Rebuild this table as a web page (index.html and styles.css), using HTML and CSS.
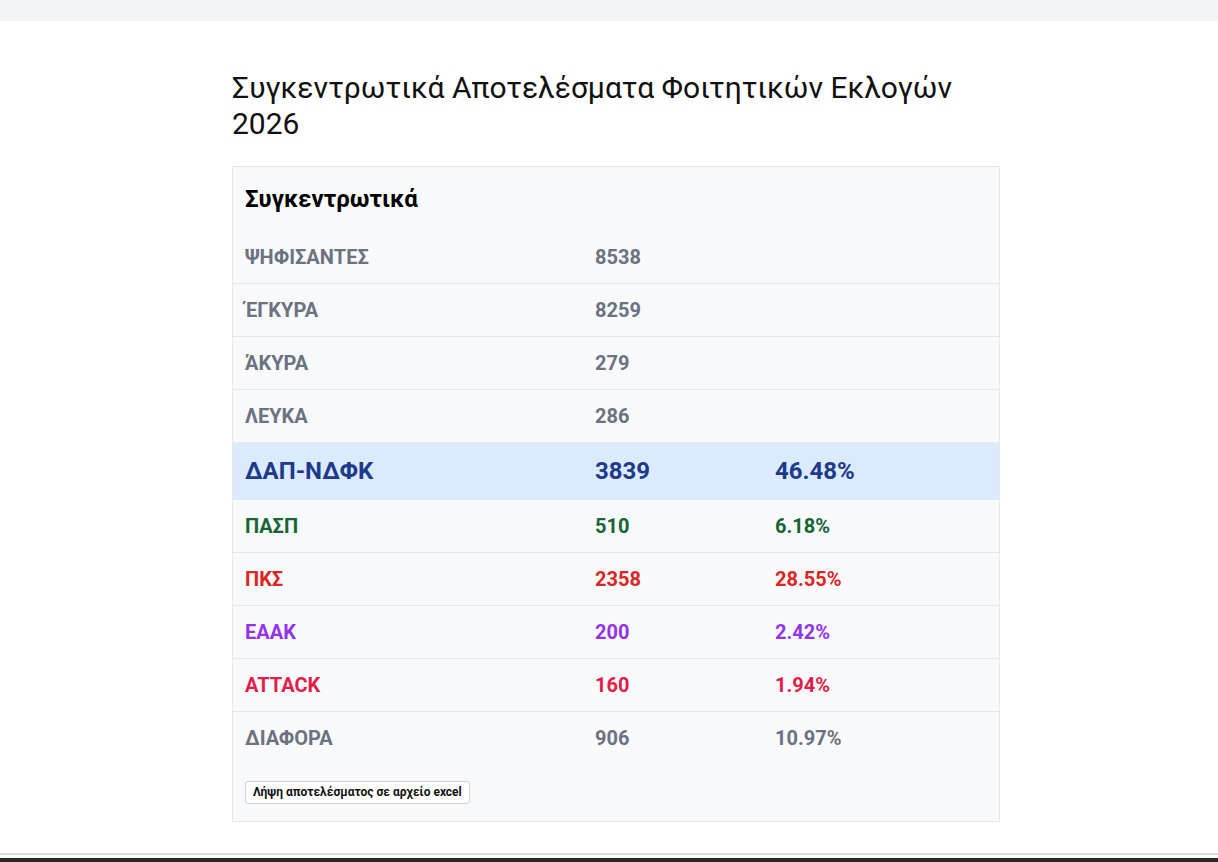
FILE: index.html
```html
<!DOCTYPE html>
<html lang="el">
<head>
<meta charset="utf-8">
<title>Αποτελέσματα</title>
<link rel="stylesheet" href="styles.css">
</head>
<body>
<div class="topbar"></div>
<main class="main">
  <h1 class="title">Συγκεντρωτικά Αποτελέσματα Φοιτητικών Εκλογών 2026</h1>
  <section class="card">
    <h2 class="card-title">Συγκεντρωτικά</h2>
    <table class="results">
      <colgroup><col class="c1"><col class="c2"><col class="c3"></colgroup>
      <tbody>
        <tr class="meta"><td>ΨΗΦΙΣΑΝΤΕΣ</td><td>8538</td><td></td></tr>
        <tr class="meta"><td>ΈΓΚΥΡΑ</td><td>8259</td><td></td></tr>
        <tr class="meta"><td>ΆΚΥΡΑ</td><td>279</td><td></td></tr>
        <tr class="meta"><td>ΛΕΥΚΑ</td><td>286</td><td></td></tr>
        <tr class="winner"><td>ΔΑΠ-ΝΔΦΚ</td><td>3839</td><td>46.48%</td></tr>
        <tr class="pasp"><td>ΠΑΣΠ</td><td>510</td><td>6.18%</td></tr>
        <tr class="pks"><td>ΠΚΣ</td><td>2358</td><td>28.55%</td></tr>
        <tr class="eaak"><td>ΕΑΑΚ</td><td>200</td><td>2.42%</td></tr>
        <tr class="attack"><td>ATTACK</td><td>160</td><td>1.94%</td></tr>
        <tr class="other last"><td>ΔΙΑΦΟΡΑ</td><td>906</td><td>10.97%</td></tr>
      </tbody>
    </table>
    <div class="actions">
      <button class="btn" type="button">Λήψη αποτελέσματος σε αρχείο excel</button>
    </div>
  </section>
</main>
<footer class="footer"><div class="footer-dark"></div></footer>
</body>
</html>
```

FILE: styles.css
```css
* { box-sizing: border-box; }
html, body { margin: 0; padding: 0; }
body {
  font-family: Roboto, "Noto Sans", "Liberation Sans", sans-serif;
  background: #ffffff;
  color: #111111;
}
.topbar {
  height: 21px;
  background: #f3f4f6;
}
.main {
  width: 768px;
  margin: 0 auto;
  padding-top: 49px;
  position: relative;
  left: 7px;
}
.title {
  margin: 0 0 24px 0;
  font-size: 30px;
  font-weight: 400;
  line-height: 36px;
  color: #111111;
  padding-right: 40px;
}
.card {
  background: #f8f9fb;
  border: 1px solid #e5e7eb;
  width: 768px;
}
.card-title {
  margin: 0;
  padding: 17px 12px 16px;
  font-size: 24px;
  line-height: 31px;
  font-weight: 700;
  color: #000000;
}
.results {
  width: 100%;
  border-collapse: collapse;
  table-layout: fixed;
}
.c1 { width: 350px; }
.c2 { width: 180px; }
.results td {
  padding: 14px 12px;
  font-size: 20px;
  line-height: 24px;
  font-weight: 700;
  border-bottom: 1px solid #e5e7eb;
}
.results tr.last td { border-bottom: none; }
.meta td { color: #6b7280; }
.winner td {
  background: #dbeafe;
  color: #1e3a8a;
  font-size: 24px;
  line-height: 29px;
  border-bottom: none;
}
.pasp td { color: #166534; }
.pks td { color: #dc2626; }
.eaak td { color: #9333ea; }
.attack td { color: #e11d48; }
.other td { color: #6b7280; }
.actions {
  padding: 17px 12px 17px;
}
.btn {
  font-family: Roboto, "Noto Sans", "Liberation Sans", sans-serif;
  font-size: 12px;
  font-weight: 700;
  color: #111111;
  background: #ffffff;
  border: 1px solid #cfd2d6;
  border-radius: 3px;
  height: 23px;
  padding: 0 7px;
  line-height: 21px;
  cursor: pointer;
}
.footer {
  margin-top: 31px;
  border-top: 2px solid #dcdcdc;
  padding-top: 3px;
}
.footer-dark {
  height: 40px;
  background: #2b2826;
}
```
